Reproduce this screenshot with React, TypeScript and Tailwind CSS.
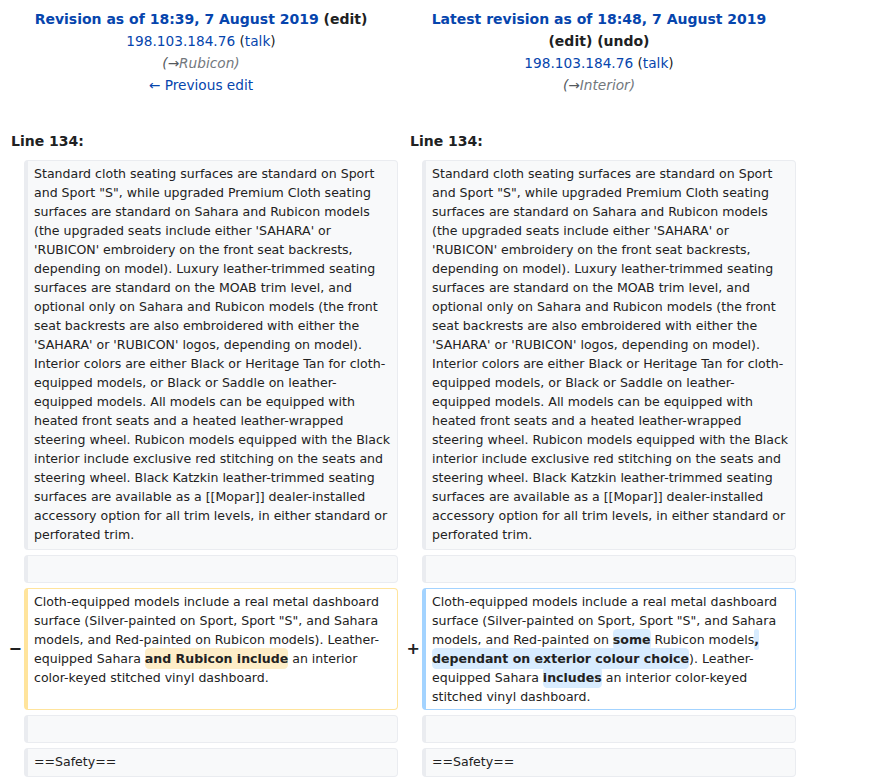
import React from "react";

const BLUE = "text-[#0645ad]";

const leftCtx = [
  "Standard cloth seating surfaces are standard on Sport",
  'and Sport "S", while upgraded Premium Cloth seating',
  "surfaces are standard on Sahara and Rubicon models",
  "(the upgraded seats include either 'SAHARA' or",
  "'RUBICON' embroidery on the front seat backrests,",
  "depending on model). Luxury leather-trimmed seating",
  "surfaces are standard on the MOAB trim level, and",
  "optional only on Sahara and Rubicon models (the front",
  "seat backrests are also embroidered with either the",
  "'SAHARA' or 'RUBICON' logos, depending on model).",
  "Interior colors are either Black or Heritage Tan for cloth-",
  "equipped models, or Black or Saddle on leather-",
  "equipped models. All models can be equipped with",
  "heated front seats and a heated leather-wrapped",
  "steering wheel. Rubicon models equipped with the Black",
  "interior include exclusive red stitching on the seats and",
  "steering wheel. Black Katzkin leather-trimmed seating",
  "surfaces are available as a [[Mopar]] dealer-installed",
  "accessory option for all trim levels, in either standard or",
  "perforated trim.",
];

function Lines({ lines }: { lines: React.ReactNode[] }) {
  return (
    <>
      {lines.map((l, i) => (
        <div key={i} className="whitespace-pre">
          {l}
        </div>
      ))}
    </>
  );
}

function Del({ children }: { children: React.ReactNode }) {
  return (
    <span className="bg-[#feeec8] font-bold rounded-[0.33em] py-[0.25em]">{children}</span>
  );
}
function Add({ children }: { children: React.ReactNode }) {
  return (
    <span className="bg-[#d8ecff] font-bold rounded-[0.33em] py-[0.25em]">{children}</span>
  );
}

const boxBase =
  "border border-l-4 rounded-[4px] pl-[6px] pr-[4px] pt-[3px] pb-[3px] text-[12.55px] leading-[19px] text-[#222222]";
const ctx = `${boxBase} bg-[#f8f9fa] border-[#eaecf0]`;
const del = `${boxBase} bg-white border-[#ffe49c]`;
const add = `${boxBase} bg-white border-[#a3d3ff]`;

function Marker({ children }: { children?: React.ReactNode }) {
  return (
    <div className="flex items-center justify-end text-[16px] font-bold text-[#202122] -mr-[2px]">
      {children}
    </div>
  );
}

export default function App() {
  return (
    <div
      className="w-[874px] min-h-[781px] bg-white text-[#202122]"
      style={{ fontFamily: '"DejaVu Sans", sans-serif' }}
    >
      <div className="w-[800px] pl-[4px]">
        {/* header */}
        <div className="grid grid-cols-[394px_394px] gap-x-[4px] pt-[8px] text-[13.7px] leading-[22px] text-center">
          <div>
            <div className="text-[14px] font-bold leading-[22px]">
              <span className={BLUE}>Revision as of 18:39, 7 August 2019</span>{" "}
              <span>(edit)</span>
            </div>
            <div className="leading-[22px]">
              <span className={BLUE}>198.103.184.76</span> (<span className={BLUE}>talk</span>)
            </div>
            <div className="italic leading-[22px]">
              <span className="text-[#54595d]">(→</span>
              <span className="text-[#72777d]">Rubicon)</span>
            </div>
            <div className={`${BLUE} leading-[22px]`}>← Previous edit</div>
          </div>
          <div>
            <div className="text-[14px] font-bold leading-[22px]">
              <span className={BLUE}>Latest revision as of 18:48, 7 August 2019</span>
            </div>
            <div className="text-[14px] font-bold leading-[22px]">(edit) (undo)</div>
            <div className="leading-[22px]">
              <span className={BLUE}>198.103.184.76</span> (<span className={BLUE}>talk</span>)
            </div>
            <div className="italic leading-[22px]">
              <span className="text-[#54595d]">(→</span>
              <span className="text-[#72777d]">Interior)</span>
            </div>
          </div>
        </div>

        {/* line numbers */}
        <div className="grid grid-cols-[394px_394px] gap-x-[4px] mt-[36px] mb-[9px] text-[14px] font-bold leading-[19px]">
          <div className="pl-[7px]">Line 134:</div>
          <div className="pl-[8px]">Line 134:</div>
        </div>

        {/* diff rows */}
        <div className="grid grid-cols-[16px_374px_16px_374px] gap-x-[4px] gap-y-[5px]">
          <Marker />
          <div className={`${ctx} pb-[5px]`}>
            <Lines lines={leftCtx} />
          </div>
          <Marker />
          <div className={`${ctx} pb-[5px]`}>
            <Lines lines={leftCtx} />
          </div>

          <Marker />
          <div className={`${ctx} h-[28px]`}></div>
          <Marker />
          <div className={`${ctx} h-[28px]`}></div>

          <Marker>−</Marker>
          <div className={del}>
            <Lines
              lines={[
                "Cloth-equipped models include a real metal dashboard",
                'surface (Silver-painted on Sport, Sport "S", and Sahara',
                "models, and Red-painted on Rubicon models). Leather-",
                <>
                  equipped Sahara <Del>and Rubicon include</Del> an interior
                </>,
                "color-keyed stitched vinyl dashboard.",
              ]}
            />
          </div>
          <Marker>+</Marker>
          <div className={add}>
            <Lines
              lines={[
                "Cloth-equipped models include a real metal dashboard",
                'surface (Silver-painted on Sport, Sport "S", and Sahara',
                <>
                  models, and Red-painted on <Add>some</Add> Rubicon models<Add>,</Add>
                </>,
                <>
                  <Add>dependant on exterior colour choice</Add>). Leather-
                </>,
                <>
                  equipped Sahara <Add>includes</Add> an interior color-keyed
                </>,
                "stitched vinyl dashboard.",
              ]}
            />
          </div>

          <Marker />
          <div className={`${ctx} h-[28px]`}></div>
          <Marker />
          <div className={`${ctx} h-[28px]`}></div>

          <Marker />
          <div className={`${ctx} h-[29px]`}>
            <div>==Safety==</div>
          </div>
          <Marker />
          <div className={`${ctx} h-[29px]`}>
            <div>==Safety==</div>
          </div>
        </div>
      </div>
    </div>
  );
}
